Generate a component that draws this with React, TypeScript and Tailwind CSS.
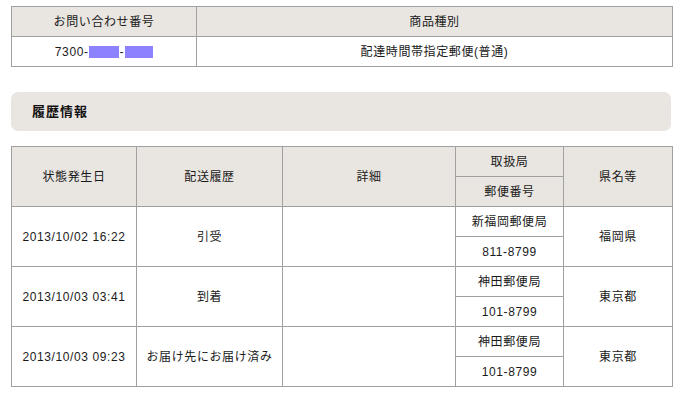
import React from "react";

const cell = "border border-[#a0a0a0] text-center align-middle";
const head = "border border-[#a0a0a0] text-center align-middle bg-[#e9e5e1]";

const rows = [
  { date: "2013/10/02 16:22", status: "引受", office: "新福岡郵便局", zip: "811-8799", pref: "福岡県" },
  { date: "2013/10/03 03:41", status: "到着", office: "神田郵便局", zip: "101-8799", pref: "東京都" },
  { date: "2013/10/03 09:23", status: "お届け先にお届け済み", office: "神田郵便局", zip: "101-8799", pref: "東京都" },
];

export default function App() {
  return (
    <div
      className="w-[678px] h-[393px] bg-white text-[12px] tracking-[0.6px] text-[#1a1a1a] overflow-hidden pt-[6px] pl-[11px]"
      style={{ fontFamily: '"Liberation Sans", "Noto Sans CJK JP", sans-serif' }}
    >
      <table className="border-collapse table-fixed w-[661px]">
        <colgroup>
          <col className="w-[185px]" />
          <col className="w-[476px]" />
        </colgroup>
        <tbody>
          <tr className="h-[30px]">
            <td className={head}>お問い合わせ番号</td>
            <td className={head}>商品種別</td>
          </tr>
          <tr className="h-[30px]">
            <td className={cell}>
              <span className="inline-flex items-center">
                7300-
                <span className="inline-block w-[30px] h-[12px] bg-[#8c82ff]" />
                <span className="px-[1px]">-</span>
                <span className="inline-block w-[28px] h-[12px] bg-[#8c82ff]" />
              </span>
            </td>
            <td className={cell}>配達時間帯指定郵便(普通)</td>
          </tr>
        </tbody>
      </table>

      <div className="mt-[25px] w-[660px] h-[39px] rounded-[7px] bg-[#e9e5e1] flex items-center pl-[21px]">
        <span className="font-bold text-[13px] tracking-[1px] text-[#111]">履歴情報</span>
      </div>

      <table className="mt-[15px] border-collapse table-fixed w-[661px]">
        <colgroup>
          <col className="w-[125px]" />
          <col className="w-[146px]" />
          <col className="w-[173px]" />
          <col className="w-[108px]" />
          <col className="w-[109px]" />
        </colgroup>
        <tbody>
          <tr className="h-[30px]">
            <td rowSpan={2} className={head}>状態発生日</td>
            <td rowSpan={2} className={head}>配送履歴</td>
            <td rowSpan={2} className={head}>詳細</td>
            <td className={head}>取扱局</td>
            <td rowSpan={2} className={head}>県名等</td>
          </tr>
          <tr className="h-[30px]">
            <td className={head}>郵便番号</td>
          </tr>
          {rows.map((r, i) => (
            <React.Fragment key={i}>
              <tr className="h-[30px]">
                <td rowSpan={2} className={cell}>{r.date}</td>
                <td rowSpan={2} className={cell}>{r.status}</td>
                <td rowSpan={2} className={cell}></td>
                <td className={cell}>{r.office}</td>
                <td rowSpan={2} className={cell}>{r.pref}</td>
              </tr>
              <tr className="h-[30px]">
                <td className={cell}>{r.zip}</td>
              </tr>
            </React.Fragment>
          ))}
        </tbody>
      </table>
    </div>
  );
}
